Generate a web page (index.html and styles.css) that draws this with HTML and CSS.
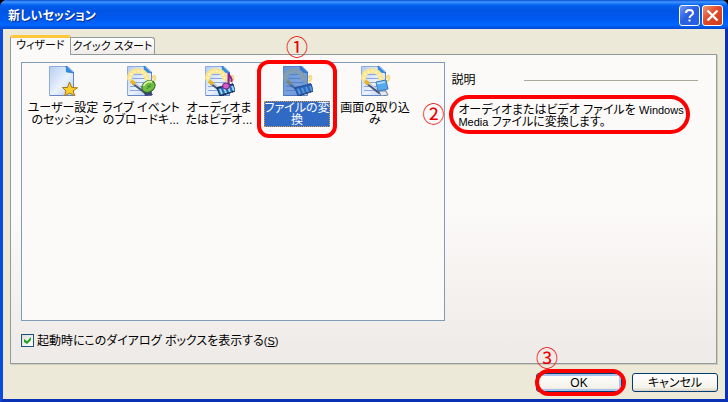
FILE: index.html
```html
<!DOCTYPE html>
<html lang="ja">
<head>
    <meta charset="utf-8">
    <title>新しいセッション</title>
    <link rel="stylesheet" href="styles.css">
</head>
<body>
    <svg class="defs" width="0" height="0" aria-hidden="true">
        <defs>
            <linearGradient id="paper" x1="0" y1="0" x2="1" y2="1">
                <stop offset="0" stop-color="#b5cdf2"/>
                <stop offset="0.55" stop-color="#eaf2fd"/>
                <stop offset="1" stop-color="#b4caee"/>
            </linearGradient>
            <g id="page">
                <path d="M2.500 2.500H21L26.500 8V31.500H2.500Z" fill="url(#paper)" stroke="#8fabdc"/>
                <path d="M26.500 8V31.500H3" fill="none" stroke="#6685c4"/>
                <path d="M19 2L26.500 9L19.500 8Z" fill="#2a8fe8" stroke="#1d69c8" stroke-width="0.6"/>
            </g>
            <g id="wizard">
                <use href="#page"/>
                <path d="M5 10.500H22M5 14.500H23M5 18.500H23M5 22.500H23M5 26.500H20" stroke="#8aa6dc"/>
                <path d="M6 17C2 10 9 6 14 6.500C20 7 22 11 22 15C24 20 30 18 30.500 14C30 10 27 12 28 15" fill="none" stroke="#f3dc84" stroke-width="2"/>
                <path d="M5 16C3 9 10 6 14 7C19 7 22 11 22 16" fill="none" stroke="#fae58d" stroke-width="5"/>
                <path d="M5 15C4 10 10 7 14 7C19 8 21 11 22 15" fill="none" stroke="#fff6c4" stroke-width="2" stroke-dasharray="2 2"/>
                <path d="M8 19L21 29" stroke="#47536f" stroke-width="3"/>
                <path d="M8 18L21 27.500" stroke="#cdd8ea" stroke-width="1.500"/>
                <path d="M6 17L10 20" stroke="#e8b422" stroke-width="3.500"/>
            </g>
            <g id="film">
                <path d="M14 24L30 20L32 27L17 32Z" fill="#2467ae" stroke="#122f5c"/>
                <path d="M17 25L19 30M21 24L23 29M25 23L27 28M29 22L31 27" stroke="#9cd5f5" stroke-width="2"/>
                <path d="M14 24L30 20M17 32L32 27" stroke="#152a50" stroke-width="1.500" stroke-dasharray="1.500 1"/>
            </g>
        </defs>
    </svg>

    <div class="window">
        <header class="titlebar">
            <h1>新しいセッション</h1>
            <button class="caption-btn help" type="button" aria-label="ヘルプ">
                <svg width="19" height="19" viewBox="0 0 19 19"><path d="M6 7C6 3 13 3 13 7C13 9.500 9.500 9 9.500 12" fill="none" stroke="#fff" stroke-width="2"/><path d="M8.500 13.500H10.500V15.500H8.500Z" fill="#fff"/></svg>
            </button>
            <button class="caption-btn close" type="button" aria-label="閉じる">
                <svg width="19" height="19" viewBox="0 0 19 19"><path d="M4.500 4.500L14.500 14.500M14.500 4.500L4.500 14.500" stroke="#fff" stroke-width="2.400"/></svg>
            </button>
        </header>

        <main class="content">
            <div class="tabs" role="tablist">
                <button class="tab active" type="button" role="tab" aria-selected="true">ウィザード</button>
                <button class="tab" type="button" role="tab" aria-selected="false">クイック スタート</button>
            </div>

            <div class="panel" role="tabpanel">
                <div class="columns">
                    <ul class="wizards">
                        <li>
                            <svg class="icon" viewBox="0 0 32 32"><use href="#page"/><path d="M22.500 18L24.800 23.500L30.500 23.800L26 27L28 32L22.500 29L17.500 32L19 27L15.500 23.500L20.500 23.500Z" fill="#f9cf2c" stroke="#a87816"/></svg>
                            <span class="label">ユーザー設定<br>のセッション</span>
                        </li>
                        <li>
                            <svg class="icon" viewBox="0 0 32 32"><use href="#wizard"/><path d="M19 28L26 28L28 31L20 32Z" fill="#3c4570"/><ellipse cx="23.500" cy="22.500" rx="7" ry="5.500" transform="rotate(-30 23.500 22.500)" fill="#73bd40" stroke="#27692b"/><path d="M18.500 22C20 18 24 17 27 18" fill="none" stroke="#d4f299" stroke-width="2"/><path d="M22 25L26 20M22 22L26 23" stroke="#3a8a35"/></svg>
                            <span class="label">ライブ イベント<br>のブロードキ...</span>
                        </li>
                        <li>
                            <svg class="icon" viewBox="0 0 32 32"><use href="#wizard"/><use href="#film"/><path d="M25.500 22V9C26 13 30 13 28.500 18" fill="none" stroke="#8d2390" stroke-width="2"/><ellipse cx="23" cy="22" rx="3.500" ry="3" fill="#d45bc8" stroke="#7c1c7f"/></svg>
                            <span class="label">オーディオま<br>たはビデオ...</span>
                        </li>
                        <li class="selected">
                            <svg class="icon" viewBox="0 0 32 32"><use href="#wizard"/><use href="#film"/><path d="M2 2H21L27 8V19L31 20L32 27L18 32H2Z" fill="#316ac5" opacity="0.6"/></svg>
                            <span class="label">ファイルの変<br>換</span>
                            <span class="callout callout-item"></span>
                            <span class="step step-item">①</span>
                        </li>
                        <li>
                            <svg class="icon" viewBox="0 0 32 32"><use href="#wizard"/><path d="M20 27H27L29 31L22 32Z" fill="#e3e9f2" stroke="#6d7c98"/><path d="M17 18L27 16L29 25L19 27Z" fill="#56a9ee" stroke="#3f78bd"/><path d="M18 19.500L26 18" stroke="#a9dafa" stroke-width="2"/></svg>
                            <span class="label">画面の取り込<br>み</span>
                        </li>
                    </ul>

                    <section class="details">
                        <h2>説明</h2>
                        <p class="description">
                            オーディオまたはビデオ ファイルを <span class="latin">Windows</span><br><span class="latin">Media</span> ファイルに変換します。
                            <span class="callout callout-text"></span>
                            <span class="step step-text">②</span>
                        </p>
                    </section>
                </div>

                <div class="startup">
                    <input type="checkbox" id="showOnStart" checked>
                    <label for="showOnStart">起動時にこのダイアログ ボックスを表示する<span class="latin">(<u>S</u>)</span></label>
                </div>
            </div>
        </main>

        <footer class="actions">
            <div class="ok-wrap">
                <button class="btn default" type="button">OK</button>
                <span class="callout callout-ok"></span>
                <span class="step step-ok">③</span>
            </div>
            <button class="btn" type="button">キャンセル</button>
        </footer>
    </div>
</body>
</html>
```
FILE: styles.css
```css
* {
    box-sizing: border-box;
}

body {
    margin: 0;
    background: #000;
    color: #000;
    font-family: "Liberation Sans", "Noto Sans CJK JP", sans-serif;
    font-size: 12px;
    line-height: 12px;
    font-feature-settings: "palt";
}

button {
    font: inherit;
    font-feature-settings: inherit;
    color: inherit;
    padding: 0;
}

.defs {
    position: absolute;
}

.latin {
    font-size: 11px;
}

.window {
    display: flex;
    flex-direction: column;
    min-height: 100vh;
    background: #ece9d8;
    border: 3px solid #0a4be0;
    border-top: 0;
    border-right-color: #0831b4;
    border-bottom-color: #0831b4;
    border-radius: 7px 7px 0 0;
}

/* title bar */
.titlebar {
    display: flex;
    align-items: center;
    gap: 2px;
    height: 29px;
    margin: 0 -3px;
    padding: 2px 5px 0 8px;
    border-radius: 7px 7px 0 0;
    background: linear-gradient(#0a50d8 0, #3f96ff 2px, #0562f0 5px, #0054e3 10px, #0058ee 18px, #0066ff 25px, #0048d0 29px);
}

.titlebar h1 {
    flex: 1;
    margin: 0;
    color: #fff;
    font-size: 12px;
    font-weight: bold;
    text-shadow: 1px 1px #0a2f8c;
}

.caption-btn {
    width: 21px;
    height: 21px;
    border: 1px solid #fff;
    border-radius: 3px;
}

.caption-btn svg {
    display: block;
}

.help {
    background: linear-gradient(135deg, #7098f4, #2c5fe0 45%, #2260e8);
}

.close {
    background: linear-gradient(135deg, #f09878, #e0492a 45%, #cc3c18);
}

/* tabs */
.content {
    flex: 1;
    display: flex;
    flex-direction: column;
    padding: 6px 8px 0 7px;
}

.tabs {
    display: flex;
    align-items: flex-end;
}

.tab {
    height: 17px;
    padding: 0 2px;
    border: 1px solid #919b9c;
    border-bottom: 0;
    border-left: 0;
    border-radius: 0 3px 0 0;
    background: linear-gradient(#fff, #efebe9);
    font-size: 11px;
    white-space: nowrap;
}

.tab.active {
    height: 20px;
    padding: 0 5px 3px;
    margin-bottom: -1px;
    border-left: 1px solid #919b9c;
    border-top: 3px solid #ffc73c;
    border-radius: 3px 3px 0 0;
    background: #fcfaf9;
    z-index: 1;
}

.panel {
    flex: 1;
    display: flex;
    flex-direction: column;
    padding: 7px 10px 16px;
    border: 1px solid #919b9c;
    background: linear-gradient(#fcfaf9 50%, #efebe8 95%);
    box-shadow: 1px 1px #d0cdbf;
}

.columns {
    flex: 1;
    display: grid;
    grid-template-columns: 5fr 3fr;
    gap: 6px;
}

/* wizard list */
.wizards {
    display: flex;
    align-items: flex-start;
    margin: 0;
    padding: 1px 2px;
    border: 1px solid #7f9db9;
    background: #fcfaf9;
    list-style: none;
}

.wizards li {
    position: relative;
    display: flex;
    flex-direction: column;
    align-items: center;
    gap: 5px;
    width: 78px;
}

.icon {
    width: 32px;
    height: 32px;
}

.label {
    padding: 1px 0;
    text-align: center;
    white-space: nowrap;
}

.selected .label {
    background: #316ac5;
    color: #fff;
    outline: 1px dotted #d89850;
    outline-offset: -1px;
}

/* description */
.details h2 {
    display: flex;
    align-items: center;
    gap: 49px;
    margin: 12px 8px 0 0;
    font-size: 12px;
    font-weight: normal;
}

.details h2::after {
    content: "";
    flex: 1;
    height: 1px;
    background: #aca899;
}

.description {
    position: relative;
    width: max-content;
    margin: 18px 0 0 7px;
    white-space: nowrap;
}

/* startup checkbox */
.startup {
    display: flex;
    align-items: center;
    gap: 3px;
    margin-top: 13px;
}

.startup input {
    appearance: none;
    width: 13px;
    height: 13px;
    margin: 0;
    border: 1px solid #1c5180;
    background: linear-gradient(135deg, #dcdcd7, #fff);
    display: grid;
    place-items: center;
}

.startup input:checked::before {
    content: "";
    width: 7px;
    height: 7px;
    background: #21a121;
    clip-path: polygon(0 29%, 43% 62%, 100% 0, 100% 43%, 43% 100%, 0 71%);
}

/* buttons */
.actions {
    display: flex;
    justify-content: flex-end;
    gap: 10px;
    padding: 9px 7px 7px;
}

.ok-wrap {
    position: relative;
    display: flex;
}

.btn {
    width: 86px;
    height: 19px;
    border: 1px solid #003c74;
    border-radius: 3px;
    background: linear-gradient(#fff, #f4f2ea 80%, #d8d2c4);
}

.btn.default {
    box-shadow: inset 0 0 0 2px #a9c3f0;
}

/* red marks over the dialog */
.callout {
    position: absolute;
    border: 4px solid #f00;
    pointer-events: none;
}

.callout-item {
    inset: -4px -1px -11px;
    border-radius: 12px;
}

.callout-text {
    inset: -9px -6px -6px -9px;
    border-radius: 20px;
}

.callout-ok {
    inset: -4px -4px -4px -1px;
    border-radius: 14px;
}

.step {
    position: absolute;
    color: #e80000;
    font-size: 22px;
    line-height: 22px;
}

.step-item {
    top: -27px;
    left: 28px;
}

.step-text {
    top: 0;
    left: -36px;
}

.step-ok {
    top: -25px;
    left: 0;
}
```
